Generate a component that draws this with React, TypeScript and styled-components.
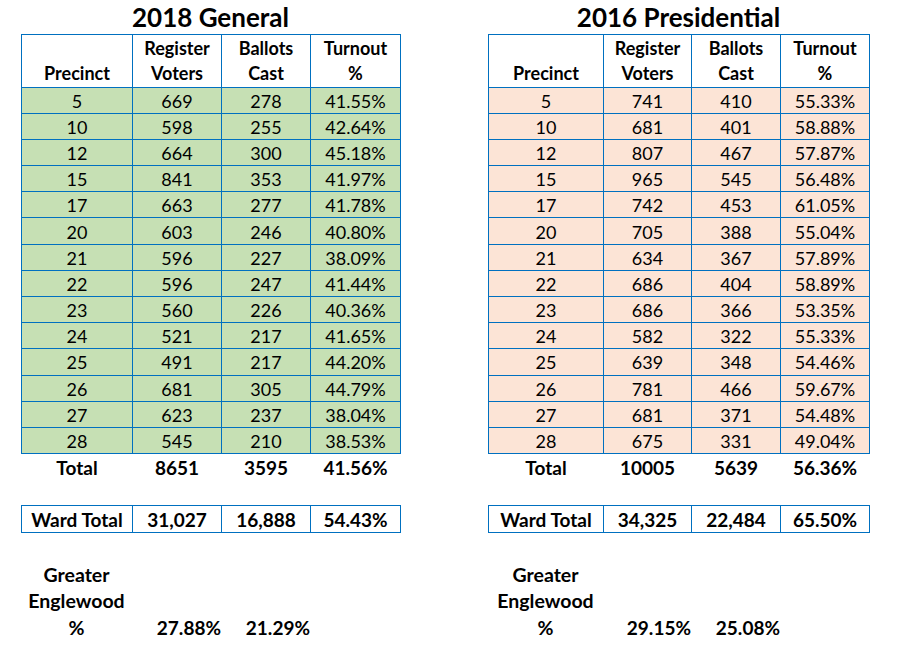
import React from "react";
import styled, { createGlobalStyle } from "styled-components";

const GlobalStyle = createGlobalStyle`
  body {
    margin: 0;
    background: #fff;
    font-family: Lato, "Open Sans", sans-serif;
    color: #000;
  }
`;

type Row = [string, string, string, string];

type Election = {
  title: string;
  fill: string;
  cols: number[];
  rows: Row[];
  total: Row;
  ward: Row;
  greater: [string, string];
};

const elections: Election[] = [
  {
    title: "2018 General",
    fill: "#c6e0b4",
    cols: [111, 89, 89, 90],
    rows: [
      ["5", "669", "278", "41.55%"],
      ["10", "598", "255", "42.64%"],
      ["12", "664", "300", "45.18%"],
      ["15", "841", "353", "41.97%"],
      ["17", "663", "277", "41.78%"],
      ["20", "603", "246", "40.80%"],
      ["21", "596", "227", "38.09%"],
      ["22", "596", "247", "41.44%"],
      ["23", "560", "226", "40.36%"],
      ["24", "521", "217", "41.65%"],
      ["25", "491", "217", "44.20%"],
      ["26", "681", "305", "44.79%"],
      ["27", "623", "237", "38.04%"],
      ["28", "545", "210", "38.53%"],
    ],
    total: ["Total", "8651", "3595", "41.56%"],
    ward: ["Ward Total", "31,027", "16,888", "54.43%"],
    greater: ["27.88%", "21.29%"],
  },
  {
    title: "2016 Presidential",
    fill: "#fce4d6",
    cols: [115, 88, 89, 89],
    rows: [
      ["5", "741", "410", "55.33%"],
      ["10", "681", "401", "58.88%"],
      ["12", "807", "467", "57.87%"],
      ["15", "965", "545", "56.48%"],
      ["17", "742", "453", "61.05%"],
      ["20", "705", "388", "55.04%"],
      ["21", "634", "367", "57.89%"],
      ["22", "686", "404", "58.89%"],
      ["23", "686", "366", "53.35%"],
      ["24", "582", "322", "55.33%"],
      ["25", "639", "348", "54.46%"],
      ["26", "781", "466", "59.67%"],
      ["27", "681", "371", "54.48%"],
      ["28", "675", "331", "49.04%"],
    ],
    total: ["Total", "10005", "5639", "56.36%"],
    ward: ["Ward Total", "34,325", "22,484", "65.50%"],
    greater: ["29.15%", "25.08%"],
  },
];

const Page = styled.div`
  display: flex;
  gap: 88px;
  padding-left: 21px;
`;

const Panel = styled.section`
  display: flex;
  flex-direction: column;
`;

const Title = styled.h1`
  margin: 0;
  height: 34px;
  line-height: 35px;
  font-size: 26px;
  font-weight: 700;
  text-align: center;
`;

const Table = styled.table`
  border-collapse: collapse;
  table-layout: fixed;
  font-size: 18px;
`;

const HeadCell = styled.th`
  height: 50.5px;
  padding: 0 0 1px;
  border: 1px solid #0070c0;
  vertical-align: bottom;
  line-height: 25px;
  font-size: 18px;
  font-weight: 700;
  text-align: center;
`;

const DataRow = styled.tr<{ $fill: string }>`
  background: ${(p) => p.$fill};
`;

const Cell = styled.td`
  height: 24.2px;
  padding: 1px 0 0;
  border: 1px solid #0070c0;
  line-height: 24px;
  text-align: center;
`;

const TotalCell = styled.td`
  height: 28px;
  padding: 0;
  line-height: 28px;
  font-size: 19px;
  font-weight: 700;
  text-align: center;
`;

const WardTable = styled(Table)`
  margin-top: 23px;
`;

const WardCell = styled.td`
  height: 26px;
  padding: 0;
  border: 1px solid #0070c0;
  line-height: 25px;
  font-size: 19px;
  font-weight: 700;
  text-align: center;
`;

const Greater = styled.div<{ $cols: string }>`
  display: grid;
  grid-template-columns: ${(p) => p.$cols};
  align-items: end;
  margin-top: 29px;
  font-size: 19.5px;
  font-weight: 700;
  line-height: 26.3px;
`;

const GreaterLabel = styled.div`
  text-align: center;
`;

const GreaterValue = styled.div`
  text-align: right;
  font-size: 19px;
`;

const headers = [
  ["Precinct"],
  ["Register", "Voters"],
  ["Ballots", "Cast"],
  ["Turnout", "%"],
];

const ElectionPanel = ({ e }: { e: Election }) => {
  const width = e.cols.reduce((a, b) => a + b, 0);
  const colgroup = (
    <colgroup>
      {e.cols.map((c, i) => (
        <col key={i} style={{ width: c }} />
      ))}
    </colgroup>
  );

  return (
    <Panel style={{ width }}>
      <Title>{e.title}</Title>
      <Table style={{ width }}>
        {colgroup}
        <thead>
          <tr>
            {headers.map((h, i) => (
              <HeadCell key={i}>
                {h.map((line, j) => (
                  <div key={j}>{line}</div>
                ))}
              </HeadCell>
            ))}
          </tr>
        </thead>
        <tbody>
          {e.rows.map((r) => (
            <DataRow key={r[0]} $fill={e.fill}>
              {r.map((v, i) => (
                <Cell key={i}>{v}</Cell>
              ))}
            </DataRow>
          ))}
          <tr>
            {e.total.map((v, i) => (
              <TotalCell key={i}>{v}</TotalCell>
            ))}
          </tr>
        </tbody>
      </Table>
      <WardTable style={{ width }}>
        {colgroup}
        <tbody>
          <tr>
            {e.ward.map((v, i) => (
              <WardCell key={i}>{v}</WardCell>
            ))}
          </tr>
        </tbody>
      </WardTable>
      <Greater $cols={e.cols.map((c) => `${c}px`).join(" ")}>
        <GreaterLabel>
          Greater
          <br />
          Englewood
          <br />%
        </GreaterLabel>
        <GreaterValue>{e.greater[0]}</GreaterValue>
        <GreaterValue>{e.greater[1]}</GreaterValue>
      </Greater>
    </Panel>
  );
};

const App = () => (
  <>
    <GlobalStyle />
    <Page>
      {elections.map((e) => (
        <ElectionPanel key={e.title} e={e} />
      ))}
    </Page>
  </>
);

export default App;
